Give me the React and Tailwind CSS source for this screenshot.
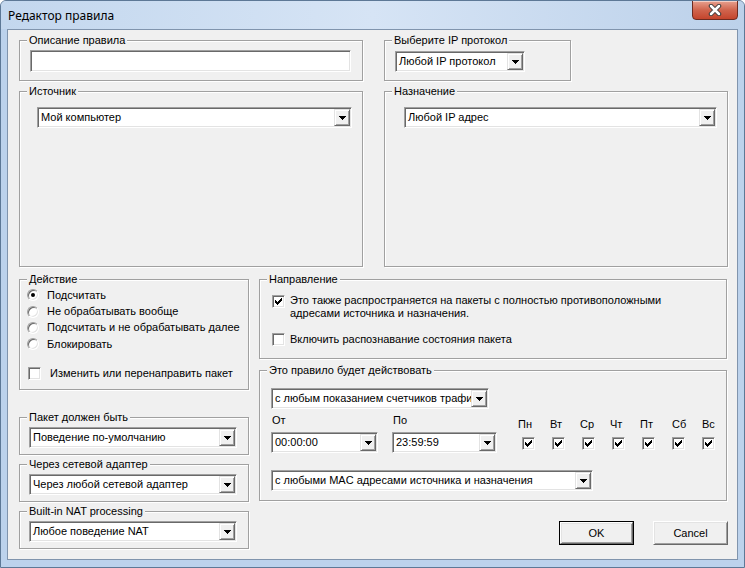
const sunken =
  "border border-t-[#a0a0a0] border-l-[#a0a0a0] border-r-white border-b-white p-px shadow-[inset_1px_1px_0_#696969,inset_-1px_-1px_0_#e3e3e3]";
const raised =
  "border border-t-[#e3e3e3] border-l-[#e3e3e3] border-r-[#696969] border-b-[#696969] shadow-[inset_1px_1px_0_#fff,inset_-1px_-1px_0_#a0a0a0] bg-[#f0f0f0]";

function Group({ title, className = "", children }) {
  return (
    <div
      className={`relative border border-[#a0a0a0] shadow-[inset_1px_1px_0_#fff,1px_1px_0_#fff] ${className}`}
    >
      <span className="absolute left-[7px] top-[-7px] bg-[#f0f0f0] px-[2px] leading-[13px] whitespace-nowrap">
        {title}
      </span>
      {children}
    </div>
  );
}

function Arrow() {
  return (
    <svg width="7" height="4" viewBox="0 0 7 4" className="block">
      <path d="M0 0h7v1H0z M1 1h5v1H1z M2 2h3v1H2z M3 3h1v1H3z" fill="#000" />
    </svg>
  );
}

function Combo({ value, className = "" }) {
  return (
    <div className={`flex h-[21px] bg-white ${sunken} ${className}`}>
      <span className="flex-1 overflow-hidden whitespace-nowrap pl-[2px] leading-[17px]">
        {value}
      </span>
      <span className={`flex w-[16px] shrink-0 items-center justify-center ${raised}`}>
        <Arrow />
      </span>
    </div>
  );
}

function Check({ checked }) {
  return (
    <span className={`block h-[13px] w-[13px] shrink-0 bg-white ${sunken}`}>
      {checked && (
        <svg width="7" height="7" viewBox="0 0 7 7" className="m-px block">
          <path
            d="M6 0h1v1H6z M5 1h2v1H5z M0 2h1v1H0z M4 2h3v1H4z M0 3h2v1H0z M3 3h3v1H3z M0 4h5v1H0z M1 5h3v1H1z M2 6h1v1H2z"
            fill="#000"
          />
        </svg>
      )}
    </span>
  );
}

function Radio({ checked }) {
  return (
    <span className="flex h-[12px] w-[12px] shrink-0 items-center justify-center rounded-full border border-t-[#a0a0a0] border-l-[#a0a0a0] border-r-white border-b-white bg-white shadow-[inset_1px_1px_0_#696969,inset_-1px_-1px_0_#e3e3e3]">
      {checked && <span className="h-[4px] w-[4px] rounded-full bg-black" />}
    </span>
  );
}

function Button({ label, isDefault }) {
  const face = (
    <span className="flex h-full w-full items-center justify-center border border-t-white border-l-white border-r-[#696969] border-b-[#696969] bg-[#f0f0f0] shadow-[inset_1px_1px_0_#e3e3e3,inset_-1px_-1px_0_#a0a0a0]">
      {label}
    </span>
  );
  return (
    <div className={`flex h-[24px] w-[75px] ${isDefault ? "border border-black" : ""}`}>
      {face}
    </div>
  );
}

const days = ["Пн", "Вт", "Ср", "Чт", "Пт", "Сб", "Вс"];

export default function App() {
  return (
    <div className="relative h-[568px] w-[745px] overflow-hidden rounded-t-[6px] border border-[#5d7896] bg-[#bcd2ec]">
      <div className="flex h-[28px] justify-between bg-gradient-to-r from-[#c3d7ee] via-[#d6e4f5] to-[#bcd1ea]">
        <span className="pl-[7px] pt-[7px] font-['Noto_Sans',sans-serif] text-[12px] leading-[16px] text-black">
          Редактор правила
        </span>
        <div className="mr-[6px] flex h-[20px] w-[46px] -mt-px items-center justify-center rounded-b-[4px] border border-[#6d2b21] bg-gradient-to-b from-[#e7a08f] via-[#d0644d] to-[#c4442c] shadow-[inset_0_1px_0_rgba(255,255,255,0.5)]">
          <svg width="16" height="12" viewBox="0 0 16 12">
            <path d="M4 2 L12 10 M12 2 L4 10" stroke="#3c3c3c" strokeWidth="4.5" strokeLinecap="round" />
            <path d="M4 2 L12 10 M12 2 L4 10" stroke="#fff" strokeWidth="2.5" strokeLinecap="round" />
          </svg>
        </div>
      </div>

      <div className="ml-[6px] h-[531px] w-[731px] border border-[#8094ad] bg-[#f0f0f0] font-['Liberation_Sans',Arial,sans-serif] text-[11px] leading-[13px] text-black">
        <div className="flex pl-[11px] pt-[10px]">
          <div className="flex w-[344px] flex-col">
            <Group title="Описание правила" className="h-[41px] pl-[10px] pt-[9px]">
              <div className={`h-[22px] w-[321px] bg-white ${sunken}`} />
            </Group>
            <Group title="Источник" className="mt-[10px] h-[176px] pl-[17px] pt-[15px]">
              <Combo value="Мой компьютер" className="w-[315px]" />
            </Group>
          </div>
          <div className="ml-[21px] flex flex-col">
            <Group title="Выберите IP протокол" className="h-[41px] w-[187px] pl-[10px] pt-[10px]">
              <Combo value="Любой IP протокол" className="w-[130px]" />
            </Group>
            <Group title="Назначение" className="mt-[10px] h-[176px] w-[344px] pl-[19px] pt-[15px]">
              <Combo value="Любой IP адрес" className="w-[313px]" />
            </Group>
          </div>
        </div>

        <div className="mt-[12px] flex pl-[11px]">
          <div className="flex w-[230px] flex-col">
            <Group title="Действие" className="h-[111px] pl-[7px] pt-[7px]">
              {["Подсчитать", "Не обрабатывать вообще", "Подсчитать и не обрабатывать далее", "Блокировать"].map(
                (label, i) => (
                  <div key={label} className="flex h-[16.4px] items-center gap-[8px]">
                    <Radio checked={i === 0} />
                    <span>{label}</span>
                  </div>
                )
              )}
              <div className="ml-px mt-[14px] flex items-center gap-[9px]">
                <Check />
                <span>Изменить или перенаправить пакет</span>
              </div>
            </Group>
            <Group title="Пакет должен быть" className="mt-[27px] h-[38px] pl-[9px] pt-[9px]">
              <Combo value="Поведение по-умолчанию" className="w-[208px]" />
            </Group>
            <Group title="Через сетевой адаптер" className="mt-[9px] h-[38px] pl-[9px] pt-[9px]">
              <Combo value="Через любой сетевой адаптер" className="w-[208px]" />
            </Group>
            <Group title="Built-in NAT processing" className="mt-[9px] h-[38px] pl-[9px] pt-[9px]">
              <Combo value="Любое поведение NAT" className="w-[208px]" />
            </Group>
          </div>

          <div className="ml-[10px] flex w-[468px] flex-col">
            <Group title="Направление" className="h-[80px] pl-[12px] pt-[14px]">
              <div className="flex items-start gap-[5px]">
                <span className="mt-px">
                  <Check checked />
                </span>
                <span>
                  Это также распространяется на пакеты с полностью противоположными
                  <br />
                  адресами источника и назначения.
                </span>
              </div>
              <div className="mt-[13px] flex items-center gap-[5px]">
                <Check />
                <span>Включить распознавание состояния пакета</span>
              </div>
            </Group>

            <Group title="Это правило будет действовать" className="mt-[11px] h-[131px] pl-[11px] pt-[17px]">
              <Combo value="с любым показанием счетчиков трафика" className="w-[218px]" />
              <div className="mt-[5px] flex">
                <div className="flex w-[107px] flex-col">
                  <span className="pl-px">От</span>
                  <Combo value="00:00:00" className="mt-[5px] w-[107px]" />
                </div>
                <div className="ml-[14px] flex w-[105px] flex-col">
                  <span className="pl-px">По</span>
                  <Combo value="23:59:59" className="mt-[5px] w-[105px]" />
                </div>
                <div className="ml-[25px] flex pt-[4px]">
                  {days.map((d, i) => (
                    <div key={d} className="flex w-[30px] flex-col items-start">
                      <span className={i === 0 ? "-ml-[4px]" : i < 5 ? "-ml-[2px]" : ""}>{d}</span>
                      <span className="mt-[6px]">
                        <Check checked />
                      </span>
                    </div>
                  ))}
                </div>
              </div>
              <Combo value="с любыми MAC адресами источника и назначения" className="mt-[17px] w-[322px]" />
            </Group>

            <div className="-mr-px mt-[20px] flex justify-end gap-[19px]">
              <Button label="OK" isDefault />
              <Button label="Cancel" />
            </div>
          </div>
        </div>
      </div>
    </div>
  );
}
